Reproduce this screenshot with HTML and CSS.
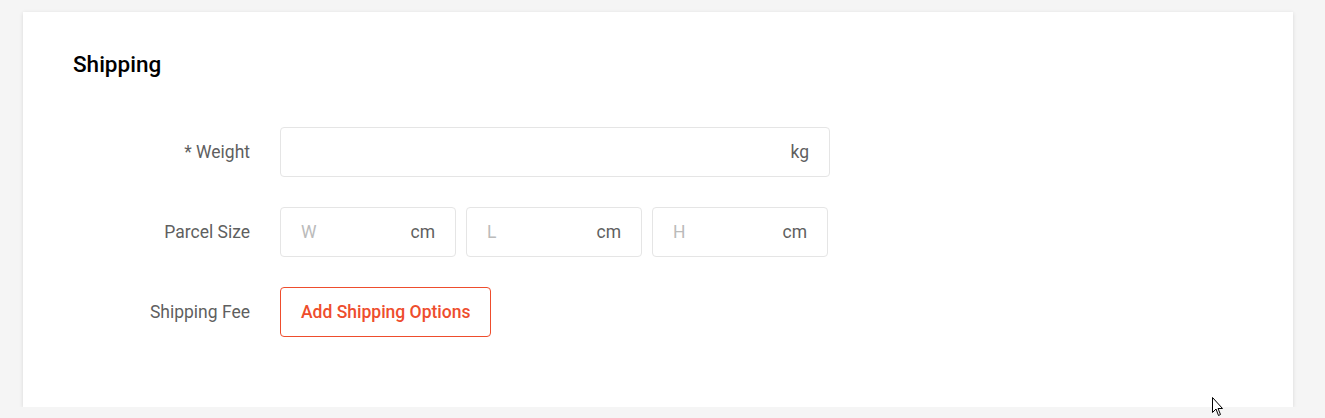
FILE: index.html
```html
<!DOCTYPE html>
<html lang="en">
  <head>
    <meta charset="utf-8" />
    <title>Shipping</title>
    <link rel="stylesheet" href="styles.css">
  </head>
  <body>
    <div class="card">
      <h2 class="card-title">Shipping</h2>
      <div class="form">
        <div class="form-row">
          <label class="form-label"><span class="required">*</span> Weight</label>
          <div class="input input-wide">
            <input type="text" />
            <span class="suffix">kg</span>
          </div>
        </div>
        <div class="form-row">
          <label class="form-label">Parcel Size</label>
          <div class="input-group">
            <div class="input input-small">
              <input type="text" placeholder="W" />
              <span class="suffix">cm</span>
            </div>
            <div class="input input-small">
              <input type="text" placeholder="L" />
              <span class="suffix">cm</span>
            </div>
            <div class="input input-small">
              <input type="text" placeholder="H" />
              <span class="suffix">cm</span>
            </div>
          </div>
        </div>
        <div class="form-row">
          <label class="form-label">Shipping Fee</label>
          <button class="btn-outline">Add Shipping Options</button>
        </div>
      </div>
    </div>
    <!-- mouse pointer from the screenshot -->
    <svg class="cursor" width="12" height="20" viewBox="0 0 12 20">
      <path d="M0.5 0.5 L0.5 15.5 L4 12 L6.5 18.5 L8.5 17.5 L6 11.5 L10.5 11.5 Z" fill="#fff" stroke="#000" stroke-width="1" />
    </svg>
  </body>
</html>
```

FILE: styles.css
```css
html {
  --color-primary: #ee4d2d;
  --color-border: #e5e5e5;
}
body {
  margin: 0;
  padding: 12px 32px 0 23px;
  background: #f5f5f5;
  font-family: Roboto, "Liberation Sans", sans-serif;
  color: #333;
}
.card {
  background: #fff;
  box-shadow: 0 1px 4px rgba(0, 0, 0, 0.12);
  padding: 39px 50px 70px;
  height: 395px;
  box-sizing: border-box;
}
.card-title {
  margin: 0;
  font-size: 22.5px;
  font-weight: 500;
  line-height: 27px;
  color: #000;
}
.form {
  margin-top: 49px;
  display: flex;
  flex-direction: column;
  gap: 30px;
}
.form-row {
  display: flex;
  align-items: center;
  gap: 30px;
}
.form-label {
  width: 177px;
  text-align: right;
  font-size: 17.5px;
  color: #5f5f5f;
}
.input {
  display: flex;
  align-items: center;
  height: 50px;
  box-sizing: border-box;
  border: 1px solid var(--color-border);
  border-radius: 4px;
  padding: 0 20px;
}
.input input {
  flex: 1;
  min-width: 0;
  border: none;
  outline: none;
  padding: 0;
  font-family: inherit;
  font-size: 17.5px;
  color: #333;
  background: transparent;
}
.input input::placeholder {
  color: #bbb;
}
.suffix {
  font-size: 17.5px;
  color: #5f5f5f;
  margin-left: 8px;
}
.input-wide {
  width: 550px;
}
.input-group {
  display: flex;
  gap: 10px;
}
.input-small {
  width: 176px;
}
.btn-outline {
  height: 50px;
  padding: 0 20px;
  border: 1px solid var(--color-primary);
  border-radius: 4px;
  background: #fff;
  color: var(--color-primary);
  font-family: inherit;
  font-size: 17.5px;
  font-weight: 500;
  cursor: pointer;
}
.cursor {
  position: absolute;
  left: 1212px;
  top: 397px;
}
```
